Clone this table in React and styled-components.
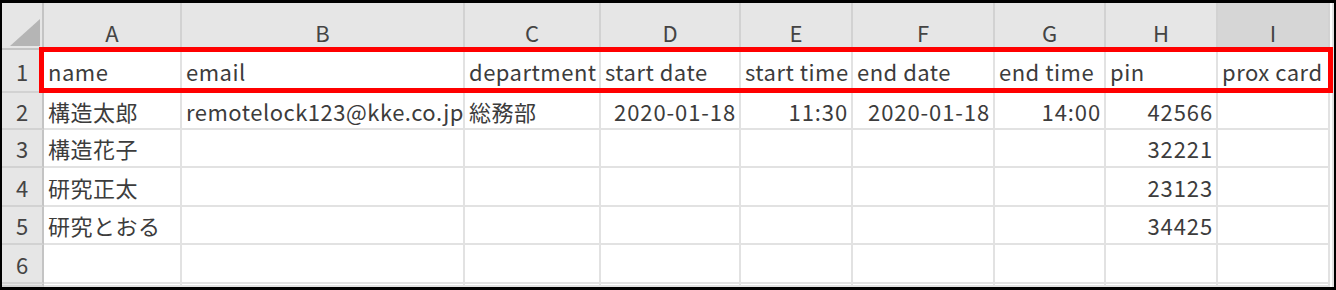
import styled, { createGlobalStyle } from "styled-components";

const GlobalStyle = createGlobalStyle`
  html, body {
    margin: 0;
    padding: 0;
    background: #000;
  }
`;

const COLS = [138, 283, 136, 140, 112, 142, 111, 112, 112];
const ROWS = [43, 37, 38, 39, 38, 39, 3];

const Frame = styled.div`
  position: relative;
  width: 1336px;
  height: 290px;
  box-sizing: border-box;
  padding: 3px 4px 3px 2px;
  background: #000;
  font-family: "Noto Sans CJK JP", "Noto Sans", sans-serif;
  color: #3c3c3c;
`;

const Sheet = styled.div`
  display: grid;
  grid-template-columns: 42px ${COLS.map((w) => `${w}px`).join(" ")};
  grid-template-rows: 47px ${ROWS.map((h) => `${h}px`).join(" ")};
  width: 1330px;
  height: 284px;
  background: #fff;
  border-right: 2px solid #e2e2e2;
  overflow: hidden;
`;

const Corner = styled.div`
  display: flex;
  align-items: flex-end;
  justify-content: flex-end;
  padding: 0 2px 2px 0;
  box-sizing: border-box;
  background: #e6e6e6;
  border-right: 2px solid #c4c4c4;
  border-bottom: 2px solid #c4c4c4;
`;

const Triangle = styled.div`
  width: 0;
  height: 0;
  border-left: 30px solid transparent;
  border-bottom: 27px solid #b5b5b5;
`;

const ColHead = styled.div`
  display: flex;
  align-items: center;
  justify-content: center;
  padding-top: 12px;
  box-sizing: border-box;
  background: ${(p) => (p.$selected ? "#d6d6d6" : "#e6e6e6")};
  border-right: 2px solid #d2d2d2;
  border-bottom: 2px solid #c4c4c4;
  font-size: 22px;
  color: #444;
`;

const RowHead = styled.div`
  display: flex;
  align-items: center;
  justify-content: center;
  box-sizing: border-box;
  background: #e6e6e6;
  border-right: 2px solid #c4c4c4;
  border-bottom: 2px solid #d2d2d2;
  font-size: 22px;
  color: #444;
`;

const Cell = styled.div`
  display: flex;
  align-items: center;
  justify-content: ${(p) => (p.$right ? "flex-end" : "flex-start")};
  padding: 0 ${(p) => (p.$right ? "3px" : "0")} 0 ${(p) => (p.$right ? "0" : "4px")};
  box-sizing: border-box;
  border-right: 2px solid #e2e2e2;
  border-bottom: 2px solid #e2e2e2;
  font-size: 22px;
  letter-spacing: ${(p) => (p.$right ? "0.9px" : "0.5px")};
  white-space: nowrap;
  overflow: hidden;
`;

const Highlight = styled.div`
  position: absolute;
  left: 39px;
  top: 47px;
  width: 1294px;
  height: 46px;
  box-sizing: border-box;
  border: 5px solid #ff0000;
  pointer-events: none;
`;

const LETTERS = ["A", "B", "C", "D", "E", "F", "G", "H", "I"];

const DATA = [
  [["name"], ["email"], ["department"], ["start date"], ["start time"], ["end date"], ["end time"], ["pin"], ["prox card"]],
  [["構造太郎"], ["remotelock123@kke.co.jp"], ["総務部"], ["2020-01-18", true], ["11:30", true], ["2020-01-18", true], ["14:00", true], ["42566", true], [""]],
  [["構造花子"], [""], [""], [""], [""], [""], [""], ["32221", true], [""]],
  [["研究正太"], [""], [""], [""], [""], [""], [""], ["23123", true], [""]],
  [["研究とおる"], [""], [""], [""], [""], [""], [""], ["34425", true], [""]],
  [[""], [""], [""], [""], [""], [""], [""], [""], [""]],
  [[""], [""], [""], [""], [""], [""], [""], [""], [""]],
];

export default function App() {
  return (
    <Frame>
      <GlobalStyle />
      <Sheet>
        <Corner>
          <Triangle />
        </Corner>
        {LETTERS.map((l) => (
          <ColHead key={l} $selected={l === "I"}>
            {l}
          </ColHead>
        ))}
        {DATA.map((row, r) => [
          <RowHead key={`h${r}`}>{r < 6 ? r + 1 : ""}</RowHead>,
          ...row.map(([text, right], c) => (
            <Cell key={`${r}-${c}`} $right={right}>
              {text}
            </Cell>
          )),
        ])}
      </Sheet>
      <Highlight />
    </Frame>
  );
}
